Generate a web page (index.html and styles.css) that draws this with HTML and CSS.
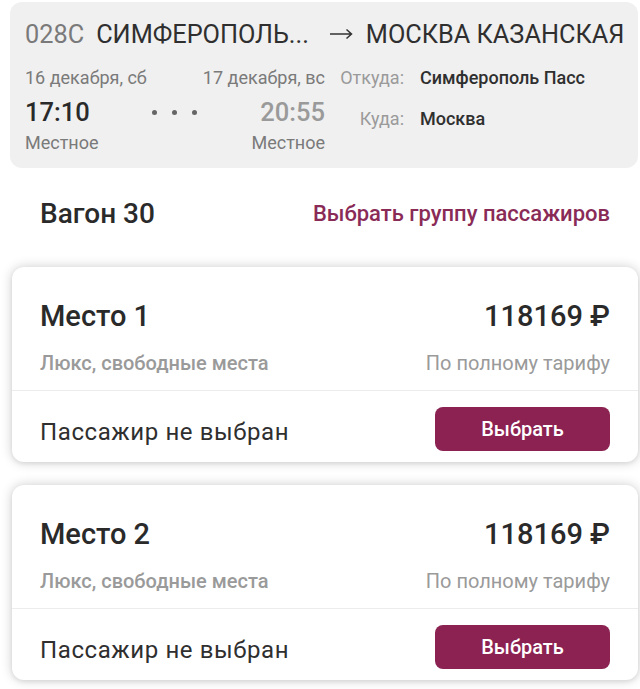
FILE: index.html
```html
<!DOCTYPE html>
<html lang="ru">
<head>
<meta charset="utf-8">
<link rel="stylesheet" href="styles.css">
</head>
<body>
<div class="trip">
  <div class="route">
    <span class="num">028С</span>
    <span class="from">СИМФЕРОПОЛЬ...</span>
    <svg class="arrow" width="24" height="12" viewBox="0 0 24 12"><path d="M1 6H22.5M17.5 1.5L22.5 6L17.5 10.5" fill="none" stroke="#333" stroke-width="1.5"/></svg>
    <span class="to">МОСКВА КАЗАНСКАЯ</span>
  </div>
  <div class="details">
    <div class="times">
      <div class="col dep">
        <div class="date">16 декабря, сб</div>
        <div class="time">17:10</div>
        <div class="zone">Местное</div>
      </div>
      <div class="dots"><i></i><i></i><i></i></div>
      <div class="col arr">
        <div class="date">17 декабря, вс</div>
        <div class="time">20:55</div>
        <div class="zone">Местное</div>
      </div>
    </div>
    <div class="stations">
      <div class="st st-from"><span class="lbl">Откуда:</span><span class="val">Симферополь Пасс</span></div>
      <div class="st st-to"><span class="lbl">Куда:</span><span class="val">Москва</span></div>
    </div>
  </div>
</div>

<div class="wagon">
  <div class="wagon-title">Вагон 30</div>
  <div class="group-link">Выбрать группу пассажиров</div>
</div>

<div class="seats">
  <div class="seat">
    <div class="seat-top">
      <div class="row main"><span>Место 1</span><span>118169 ₽</span></div>
      <div class="row sub"><span class="cls">Люкс, свободные места</span><span class="tariff">По полному тарифу</span></div>
    </div>
    <div class="seat-bottom">
      <span class="passenger">Пассажир не выбран</span>
      <button class="choose">Выбрать</button>
    </div>
  </div>
  <div class="seat">
    <div class="seat-top">
      <div class="row main"><span>Место 2</span><span>118169 ₽</span></div>
      <div class="row sub"><span class="cls">Люкс, свободные места</span><span class="tariff">По полному тарифу</span></div>
    </div>
    <div class="seat-bottom">
      <span class="passenger">Пассажир не выбран</span>
      <button class="choose">Выбрать</button>
    </div>
  </div>
</div>
</body>
</html>
```

FILE: styles.css
```css
* { box-sizing: border-box; }
html, body { margin: 0; padding: 0; background: #fff; }
body {
  width: 640px;
  height: 689px;
  overflow: hidden;
  font-family: Roboto, "Noto Sans", sans-serif;
  color: #2f2f2f;
}

.trip {
  margin: 2px 2px 0 10px;
  height: 166px;
  background: #f0f0f0;
  border-radius: 12px;
  padding: 19px 0 0 15px;
}
.route {
  display: flex;
  align-items: baseline;
  font-size: 25.3px;
  line-height: 28px;
  white-space: nowrap;
}
.route .num { color: #7a7a7a; margin-right: 12px; }
.route .from { color: #2f2f2f; }
.route .arrow { margin: 0 13px 0 20px; align-self: center; position: relative; top: -1px; }
.route .to { color: #2f2f2f; }

.details {
  display: flex;
  margin-top: 17px;
}
.times {
  display: flex;
  justify-content: space-between;
  width: 300px;
  flex-shrink: 0;
}
.col { display: flex; flex-direction: column; flex-shrink: 0; white-space: nowrap; }
.date { font-size: 18px; line-height: 24px; color: #7a7a7a; }
.time { font-size: 25.5px; line-height: 30px; font-weight: 500; margin-top: 7px; }
.zone { font-size: 18px; line-height: 24px; color: #7a7a7a; margin-top: 4px; }
.dep .time { color: #2a2a2a; }
.arr { align-items: flex-end; }
.arr .time { color: #9a9a9a; }
.dots {
  display: flex;
  gap: 15px;
  margin-top: 44px;
  height: 6px;
  flex-shrink: 0;
}
.dots i {
  display: block;
  width: 5px;
  height: 5px;
  border-radius: 50%;
  background: #666;
}

.stations {
  display: flex;
  flex-direction: column;
  margin-left: 15px;
}
.st { display: flex; font-size: 18px; line-height: 24px; white-space: nowrap; }
.st .lbl { width: 64px; text-align: right; color: #9a9a9a; margin-right: 16px; }
.st .val { font-weight: 500; color: #2f2f2f; }
.st-to { margin-top: 17px; }

.wagon {
  display: flex;
  justify-content: space-between;
  align-items: center;
  padding: 0 30px 0 40px;
  height: 90px;
}
.wagon-title { font-size: 28px; font-weight: 500; color: #2a2a2a; }
.group-link { font-size: 22px; font-weight: 500; color: #8a2b57; }

.seats {
  display: flex;
  flex-direction: column;
  gap: 23px;
  padding: 9px 2px 0 12px;
}
.seat {
  background: #fff;
  border-radius: 12px;
  height: 195px;
  box-shadow: 0 0 12px rgba(0,0,0,0.2), 0 2px 4px rgba(0,0,0,0.06);
  display: flex;
  flex-direction: column;
}
.seat-top {
  padding: 34px 28px 15px;
  border-bottom: 1px solid #ececec;
}
.row { display: flex; justify-content: space-between; align-items: center; white-space: nowrap; }
.row.main { font-size: 29px; line-height: 30px; font-weight: 500; color: #2a2a2a; }
.row.sub { font-size: 20px; line-height: 24px; color: #9a9a9a; margin-top: 20px; }
.row.sub .cls { font-weight: 500; }
.seat-bottom {
  flex: 1;
  display: flex;
  justify-content: space-between;
  align-items: flex-start;
  padding: 16px 28px 0;
}
.passenger { font-size: 24px; letter-spacing: 0.6px; line-height: 44px; margin-top: 3px; color: #2f2f2f; white-space: nowrap; }
.choose {
  width: 175px;
  height: 44px;
  border: none;
  border-radius: 8px;
  background: #8b2251;
  color: #fff;
  font-family: Roboto, "Noto Sans", sans-serif;
  font-size: 20px;
  font-weight: 500;
}
```
